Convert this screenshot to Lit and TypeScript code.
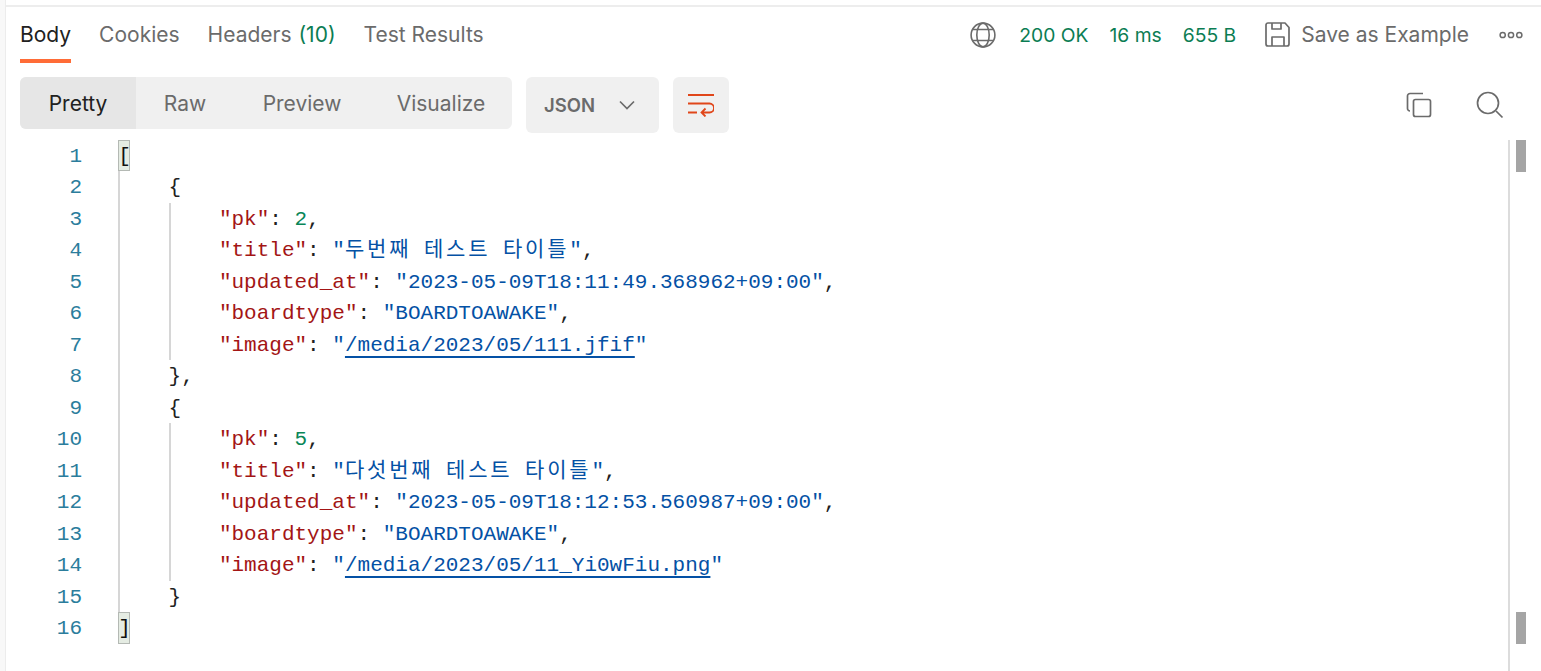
import { LitElement, html, css } from "lit";
import { customElement } from "lit/decorators.js";

type Tok = [string, string];
const S = (t: string): Tok => ["s", t];
const K = (t: string): Tok => ["k", t];
const P = (t: string): Tok => ["p", t];
const N = (t: string): Tok => ["n", t];
const H = (t: string): Tok => ["h", t];
const L = (t: string): Tok => ["l", t];

const lines: { ind: number; toks: Tok[] }[] = [
  { ind: 0, toks: [["b", "["]] },
  { ind: 1, toks: [P("{")] },
  { ind: 2, toks: [K('"pk"'), P(": "), N("2"), P(",")] },
  { ind: 2, toks: [K('"title"'), P(": "), S('"'), H("두번째"), S(" "), H("테스트"), S(" "), H("타이틀"), S('"'), P(",")] },
  { ind: 2, toks: [K('"updated_at"'), P(": "), S('"2023-05-09T18:11:49.368962+09:00"'), P(",")] },
  { ind: 2, toks: [K('"boardtype"'), P(": "), S('"BOARDTOAWAKE"'), P(",")] },
  { ind: 2, toks: [K('"image"'), P(": "), S('"'), L("/media/2023/05/111.jfif"), S('"')] },
  { ind: 1, toks: [P("},")] },
  { ind: 1, toks: [P("{")] },
  { ind: 2, toks: [K('"pk"'), P(": "), N("5"), P(",")] },
  { ind: 2, toks: [K('"title"'), P(": "), S('"'), H("다섯번째"), S(" "), H("테스트"), S(" "), H("타이틀"), S('"'), P(",")] },
  { ind: 2, toks: [K('"updated_at"'), P(": "), S('"2023-05-09T18:12:53.560987+09:00"'), P(",")] },
  { ind: 2, toks: [K('"boardtype"'), P(": "), S('"BOARDTOAWAKE"'), P(",")] },
  { ind: 2, toks: [K('"image"'), P(": "), S('"'), L("/media/2023/05/11_Yi0wFiu.png"), S('"')] },
  { ind: 1, toks: [P("}")] },
  { ind: 0, toks: [["b", "]"]] },
];

@customElement("app-root")
export class AppRoot extends LitElement {
  static styles = css`
    :host { display: flex; width: 1541px; height: 671px; overflow: hidden; background: #fff; font-family: Inter, "Noto Sans", sans-serif; color: #6b6b6b; }
    .strip { width: 5px; flex: none; background: #f8f8f8; border-right: 1px solid #ececec; }
    .frame { flex: 1; min-width: 0; margin-top: 5px; border-top: 2px solid #ededed; display: flex; flex-direction: column; }
    .top { display: flex; align-items: flex-start; height: 56px; padding-left: 14px; font-size: 21px; flex: none; }
    .tab { height: 56px; box-sizing: border-box; padding-top: 14px; margin-right: 28px; line-height: 28px; white-space: nowrap; }
    .tab.on { color: #212121; border-bottom: 4px solid #ff6c37; }
    .count { color: #0b7d53; margin-left: 1px; }
    .status { margin-left: auto; display: flex; align-items: center; height: 56px; box-sizing: border-box; padding-bottom: 1px; }
    .ok { color: #0b7d53; font-size: 19.3px; white-space: nowrap; }
    .save { font-size: 21px; white-space: nowrap; }
    .globe { margin-right: 23px; display: block; }
    .ms { margin-left: 21px; }
    .disk { margin-left: 29px; margin-right: 11px; display: block; }
    .dots { margin-left: 30px; margin-right: 18px; display: block; }
    .bar { display: flex; align-items: flex-start; height: 77px; padding-left: 14px; flex: none; box-sizing: border-box; padding-top: 14px; }
    .seg { display: flex; height: 52px; width: 492px; background: #f0f0f0; border-radius: 6px; overflow: hidden; font-size: 21px; }
    .seg div { line-height: 53px; text-align: center; flex: none; }
    .seg .sel { background: #e6e6e6; color: #212121; width: 116px; }
    .w-raw { width: 98px; }
    .w-pre { width: 136px; }
    .w-vis { width: 142px; }
    .lang { margin-left: 14px; width: 133px; height: 56px; background: #f0f0f0; border-radius: 6px; display: flex; align-items: center; font-weight: 600; font-size: 18.5px; box-sizing: border-box; padding: 0 0 1px 18px; }
    .lang svg { margin-left: 24px; margin-top: 1px; }
    .wrap { margin-left: 14px; width: 56px; height: 56px; background: #f0f0f0; border-radius: 6px; display: flex; align-items: center; justify-content: center; }
    .tools { margin-left: auto; display: flex; align-items: center; height: 56px; }
    .tools svg { display: block; }
    .copy { margin-right: 44px; }
    .find { margin-right: 37px; }
    .code { position: relative; flex: 1; font-family: "Liberation Mono", monospace; font-size: 21px; min-height: 0; }
    .ln { display: flex; height: 31.47px; line-height: 33px; white-space: pre; }
    .no { width: 76px; text-align: right; color: #2b7d9c; flex: none; }
    .txt { margin-left: 36.3px; flex: none; color: #212121; }
    .guide { width: 50.3px; height: 31.47px; display: inline-block; box-sizing: border-box; border-left: 2px solid #d6d6d6; vertical-align: top; }
    .k { color: #a31515; }
    .s { color: #0451a5; }
    .n { color: #098658; }
    .h { color: #0451a5; font-family: "Noto Sans CJK KR", sans-serif; font-size: 21px; letter-spacing: 2.8px; line-height: 0; }
    .l { color: #0451a5; text-decoration: underline; text-underline-offset: 5px; text-decoration-thickness: 2px; }
    .b { display: inline-block; box-sizing: border-box; background: #e5ece3; border: 1px solid #b4b9b4; height: 31.47px; line-height: 31px; color: #111; vertical-align: top; width: 11.5px; text-indent: -1px; }
    .rail { position: absolute; top: 0; bottom: 0; left: 1502px; width: 2px; background: #dcdcdc; }
    .thumb { position: absolute; left: 1510px; width: 10px; height: 32px; background: #a5a5a5; }
    .t1 { top: 0; }
    .t2 { top: 472px; }
  `;

  private line(l: { ind: number; toks: Tok[] }, i: number) {
    const guides = [];
    if (l.ind >= 1) guides.push(html`<span class="guide"></span>`);
    if (l.ind === 2) guides.push(html`<span class="guide"></span>`);
    return html`<div class="ln"><span class="no">${i + 1}</span><span class="txt">${guides}${l.toks.map(
      ([c, t]) => html`<span class=${c}>${t}</span>`
    )}</span></div>`;
  }

  render() {
    return html`<div class="strip"></div><div class="frame">
      <div class="top">
        <div class="tab on">Body</div>
        <div class="tab">Cookies</div>
        <div class="tab">Headers <span class="count">(10)</span></div>
        <div class="tab">Test Results</div>
        <div class="status">
          <svg class="globe" width="26" height="26" viewBox="0 0 26 26" fill="none" stroke="#6b6b6b" stroke-width="1.6">
            <circle cx="13" cy="13" r="11.9"></circle>
            <ellipse cx="13" cy="13" rx="6.2" ry="11.900"></ellipse>
            <path d="M2.800 7.500h20.400M2.800 18.500h20.400"></path>
          </svg>
          <span class="ok">200 OK</span>
          <span class="ok ms">16 ms</span>
          <span class="ok ms">655 B</span>
          <svg class="disk" width="25" height="25" viewBox="0 0 25 25" fill="none" stroke="#6b6b6b" stroke-width="1.700" stroke-linejoin="round">
            <path d="M1 3a2 2 0 0 1 2-2h17l4 4.500V22a2 2 0 0 1-2 2H3a2 2 0 0 1-2-2z"></path>
            <path d="M7 1v6h9V1M7 24v-9h12v9"></path>
          </svg>
          <span class="save">Save as Example</span>
          <svg class="dots" width="24" height="8" viewBox="0 0 24 8" fill="none" stroke="#6b6b6b" stroke-width="1.500">
            <circle cx="3.700" cy="4" r="2.600"></circle><circle cx="12" cy="4" r="2.600"></circle><circle cx="20.300" cy="4" r="2.600"></circle>
          </svg>
        </div>
      </div>
      <div class="bar">
        <div class="seg">
          <div class="sel">Pretty</div>
          <div class="w-raw">Raw</div>
          <div class="w-pre">Preview</div>
          <div class="w-vis">Visualize</div>
        </div>
        <div class="lang">JSON
          <svg width="16" height="10" viewBox="0 0 16 10" fill="none" stroke="#6b6b6b" stroke-width="1.700"><path d="M1 1.500l7 7 7-7"></path></svg>
        </div>
        <div class="wrap">
          <svg width="26" height="24" viewBox="0 0 26 24" fill="none" stroke="#e0461a" stroke-width="1.800">
            <path d="M0 2h26M0 19.500h9"></path>
            <path d="M0 10.500h21.500a4.500 4.500 0 0 1 0 9H14M17.500 15.500l-4 4 4 4"></path>
          </svg>
        </div>
        <div class="tools">
          <svg class="copy" width="26" height="26" viewBox="0 0 26 26" fill="none" stroke="#6b6b6b" stroke-width="1.700">
            <rect x="7.500" y="7.500" width="17" height="17" rx="2"></rect>
            <path d="M4 19a2.500 2.500 0 0 1-2.500-2.500V4A2.500 2.500 0 0 1 4 1.500h13"></path>
          </svg>
          <svg class="find" width="28" height="28" viewBox="0 0 28 28" fill="none" stroke="#6b6b6b" stroke-width="1.700">
            <circle cx="12" cy="12" r="10.500"></circle><path d="M20 20l6.500 6.500"></path>
          </svg>
        </div>
      </div>
      <div class="code">
        ${lines.map((l, i) => this.line(l, i))}
        <div class="rail"></div>
        <div class="thumb t1"></div>
        <div class="thumb t2"></div>
      </div>
    </div>`;
  }
}
